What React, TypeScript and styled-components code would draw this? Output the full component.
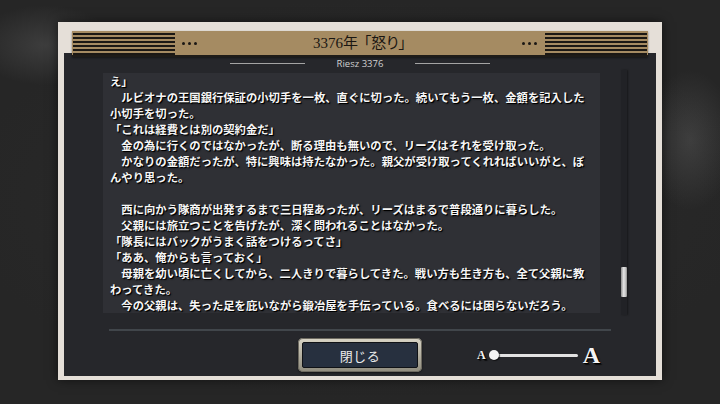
import React from "react";
import styled, { createGlobalStyle } from "styled-components";

const Global = createGlobalStyle`
  html, body { margin: 0; padding: 0; background: #2a2a2a; }
  body { font-family: "Noto Sans CJK JP", "Noto Sans", sans-serif; }
`;

const Screen = styled.div`
  width: 720px;
  height: 404px;
  overflow: hidden;
  box-sizing: border-box;
  padding-top: 22px;
  display: flex;
  justify-content: center;
  align-items: flex-start;
  background:
    radial-gradient(ellipse 70px 40px at 45px 45px, rgba(80,80,80,0.55), rgba(80,80,80,0) 100%),
    radial-gradient(ellipse 45px 70px at 690px 140px, rgba(85,85,85,0.5), rgba(85,85,85,0) 100%),
    radial-gradient(ellipse 400px 200px at 360px 200px, #2c2c2c, #262626 100%);
`;

const Frame = styled.div`
  width: 604px;
  height: 358px;
  box-sizing: border-box;
  padding: 9px 6px 4px;
  background: #e5dfd8;
  display: flex;
  flex-direction: column;
  box-shadow: 0 0 10px rgba(0, 0, 0, 0.55);
`;

const Header = styled.div`
  position: relative;
  z-index: 1;
  margin: 0 8px;
  height: 26px;
  box-sizing: border-box;
  background: #a58b62;
  border-bottom: 2px solid #1f1c18;
  display: flex;
  align-items: center;
  box-shadow: 0 1px 2px rgba(0, 0, 0, 0.45);
`;

const Stripes = styled.div`
  width: 102px;
  height: 100%;
  margin: 0 1px;
  background: repeating-linear-gradient(
    to bottom,
    #a58b62 0px,
    #a58b62 2px,
    #1b1814 2px,
    #1b1814 4px
  );
`;

const Dots = styled.div<{ $side: "left" | "right" }>`
  display: flex;
  gap: 3px;
  margin: ${(p) => (p.$side === "left" ? "0 0 0 6px" : "0 7px 0 0")};
`;

const Dot = styled.span`
  width: 3px;
  height: 3px;
  border-radius: 50%;
  background: #1a1714;
`;

const Title = styled.div`
  flex: 1;
  text-align: center;
  font-family: "Liberation Serif", "Noto Sans CJK JP", serif;
  font-size: 15px;
  color: #1b1712;
  font-feature-settings: "palt";
  line-height: 1;
  padding-top: 1px;
  word-spacing: 2px;
`;

const Interior = styled.div`
  flex: 1;
  margin-top: -4px;
  background: #26272b;
  display: flex;
  flex-direction: column;
  padding: 4px 0 4px;
`;

const SubRow = styled.div`
  height: 13px;
  display: flex;
  align-items: center;
  justify-content: center;
  gap: 32px;
`;

const SubLine = styled.span`
  width: 75px;
  height: 1px;
  background: #a4a4a4;
`;

const SubText = styled.span`
  font-family: "Open Sans", "Noto Sans", sans-serif;
  font-size: 9.5px;
  color: #d0d0d0;
  line-height: 1;
`;

const BodyRow = styled.div`
  height: 245px;
  display: flex;
  align-items: flex-start;
  padding-left: 39px;
  gap: 21px;
`;

const Panel = styled.div`
  width: 497px;
  height: 240px;
  margin-top: 3px;
  box-sizing: border-box;
  padding-left: 7px;
  background: #2f3035;
  overflow: hidden;
`;

const Line = styled.div`
  height: 16px;
  line-height: 16px;
  white-space: pre;
  font-family: "Noto Sans CJK JP", sans-serif;
  font-weight: 700;
  font-size: 11.33px;
  color: #f6f6f6;
  text-shadow: 1px 1px 0 #000, 1px 1px 2px rgba(0, 0, 0, 0.8);
`;

const Track = styled.div`
  width: 6px;
  height: 245px;
  background: #212226;
  box-shadow: 1px 0 2px rgba(0, 0, 0, 0.4);
  display: flex;
  flex-direction: column;
`;

const Thumb = styled.div<{ $offset: number }>`
  margin-top: ${(p) => p.$offset}px;
  height: 30px;
  border-radius: 1px;
  background: linear-gradient(to right, #8d8d8d, #e6e6e6 45%, #bdbdbd 80%, #8a8a8a);
`;

const Divider = styled.div`
  height: 2px;
  margin: 14px 45px 0;
  background: #41464b;
`;

const Footer = styled.div`
  margin-top: 7px;
  height: 34px;
  display: grid;
  grid-template-columns: 1fr auto 1fr;
  align-items: center;
`;

const CloseButton = styled.button`
  grid-column: 2;
  width: 124px;
  height: 34px;
  box-sizing: border-box;
  padding: 4px;
  border: none;
  border-radius: 5px;
  background: linear-gradient(to bottom, #d8d4c6, #b5b1a2 50%, #8f8b7d);
  box-shadow: inset 0 0 0 1px #6d6a60, 0 1px 2px rgba(0, 0, 0, 0.5);
  cursor: pointer;
  display: flex;
`;

const ButtonFace = styled.span`
  flex: 1;
  border-radius: 2px;
  border: 1px solid #101216;
  background: #27303f;
  display: flex;
  align-items: center;
  justify-content: center;
  font-family: "Noto Sans CJK JP", sans-serif;
  font-size: 13px;
  color: #ebebeb;
  letter-spacing: 0.5px;
`;

const Slider = styled.div`
  grid-column: 3;
  justify-self: start;
  padding-left: 55px;
  display: flex;
  align-items: center;
`;

const Glyph = styled.span<{ $size: number }>`
  font-family: "Liberation Serif", serif;
  font-weight: 700;
  font-size: ${(p) => p.$size}px;
  line-height: 1;
  color: #f4f4f4;
  text-shadow: 1px 1px 0 #000, 2px 2px 1px rgba(0, 0, 0, 0.7);
`;

const Rail = styled.div`
  position: relative;
  width: 89px;
  height: 10px;
  margin: 0 5px 0 3px;
  display: flex;
  align-items: center;
`;

const RailBar = styled.div`
  flex: 1;
  height: 3px;
  margin-left: 5px;
  border-radius: 2px;
  background: #e2e2e2;
`;

const Knob = styled.div`
  position: absolute;
  left: 0;
  top: 0;
  width: 10px;
  height: 10px;
  border-radius: 50%;
  background: #f4f4f4;
  box-shadow: 1px 1px 1px rgba(0, 0, 0, 0.6);
`;

const lines = [
  "え」",
  "　ルビオナの王国銀行保証の小切手を一枚、直ぐに切った。続いてもう一枚、金額を記入した",
  "小切手を切った。",
  "「これは経費とは別の契約金だ」",
  "　金の為に行くのではなかったが、断る理由も無いので、リーズはそれを受け取った。",
  "　かなりの金額だったが、特に興味は持たなかった。親父が受け取ってくれればいいがと、ぼ",
  "んやり思った。",
  "",
  "　西に向かう隊商が出発するまで三日程あったが、リーズはまるで普段通りに暮らした。",
  "　父親には旅立つことを告げたが、深く問われることはなかった。",
  "「隊長にはバックがうまく話をつけるってさ」",
  "「ああ、俺からも言っておく」",
  "　母親を幼い頃に亡くしてから、二人きりで暮らしてきた。戦い方も生き方も、全て父親に教",
  "わってきた。",
  "　今の父親は、失った足を庇いながら鍛冶屋を手伝っている。食べるには困らないだろう。",
];

export default function App() {
  return (
    <>
      <Global />
      <Screen>
        <Frame>
          <Header>
            <Stripes />
            <Dots $side="left">
              <Dot />
              <Dot />
              <Dot />
            </Dots>
            <Title>3376年 「怒り」</Title>
            <Dots $side="right">
              <Dot />
              <Dot />
              <Dot />
            </Dots>
            <Stripes />
          </Header>
          <Interior>
            <SubRow>
              <SubLine />
              <SubText>Riesz 3376</SubText>
              <SubLine />
            </SubRow>
            <BodyRow>
              <Panel>
                {lines.map((l, i) => (
                  <Line key={i}>{l}</Line>
                ))}
              </Panel>
              <Track>
                <Thumb $offset={197} />
              </Track>
            </BodyRow>
            <Divider />
            <Footer>
              <CloseButton>
                <ButtonFace>閉じる</ButtonFace>
              </CloseButton>
              <Slider>
                <Glyph $size={12}>A</Glyph>
                <Rail>
                  <RailBar />
                  <Knob />
                </Rail>
                <Glyph $size={24}>A</Glyph>
              </Slider>
            </Footer>
          </Interior>
        </Frame>
      </Screen>
    </>
  );
}
